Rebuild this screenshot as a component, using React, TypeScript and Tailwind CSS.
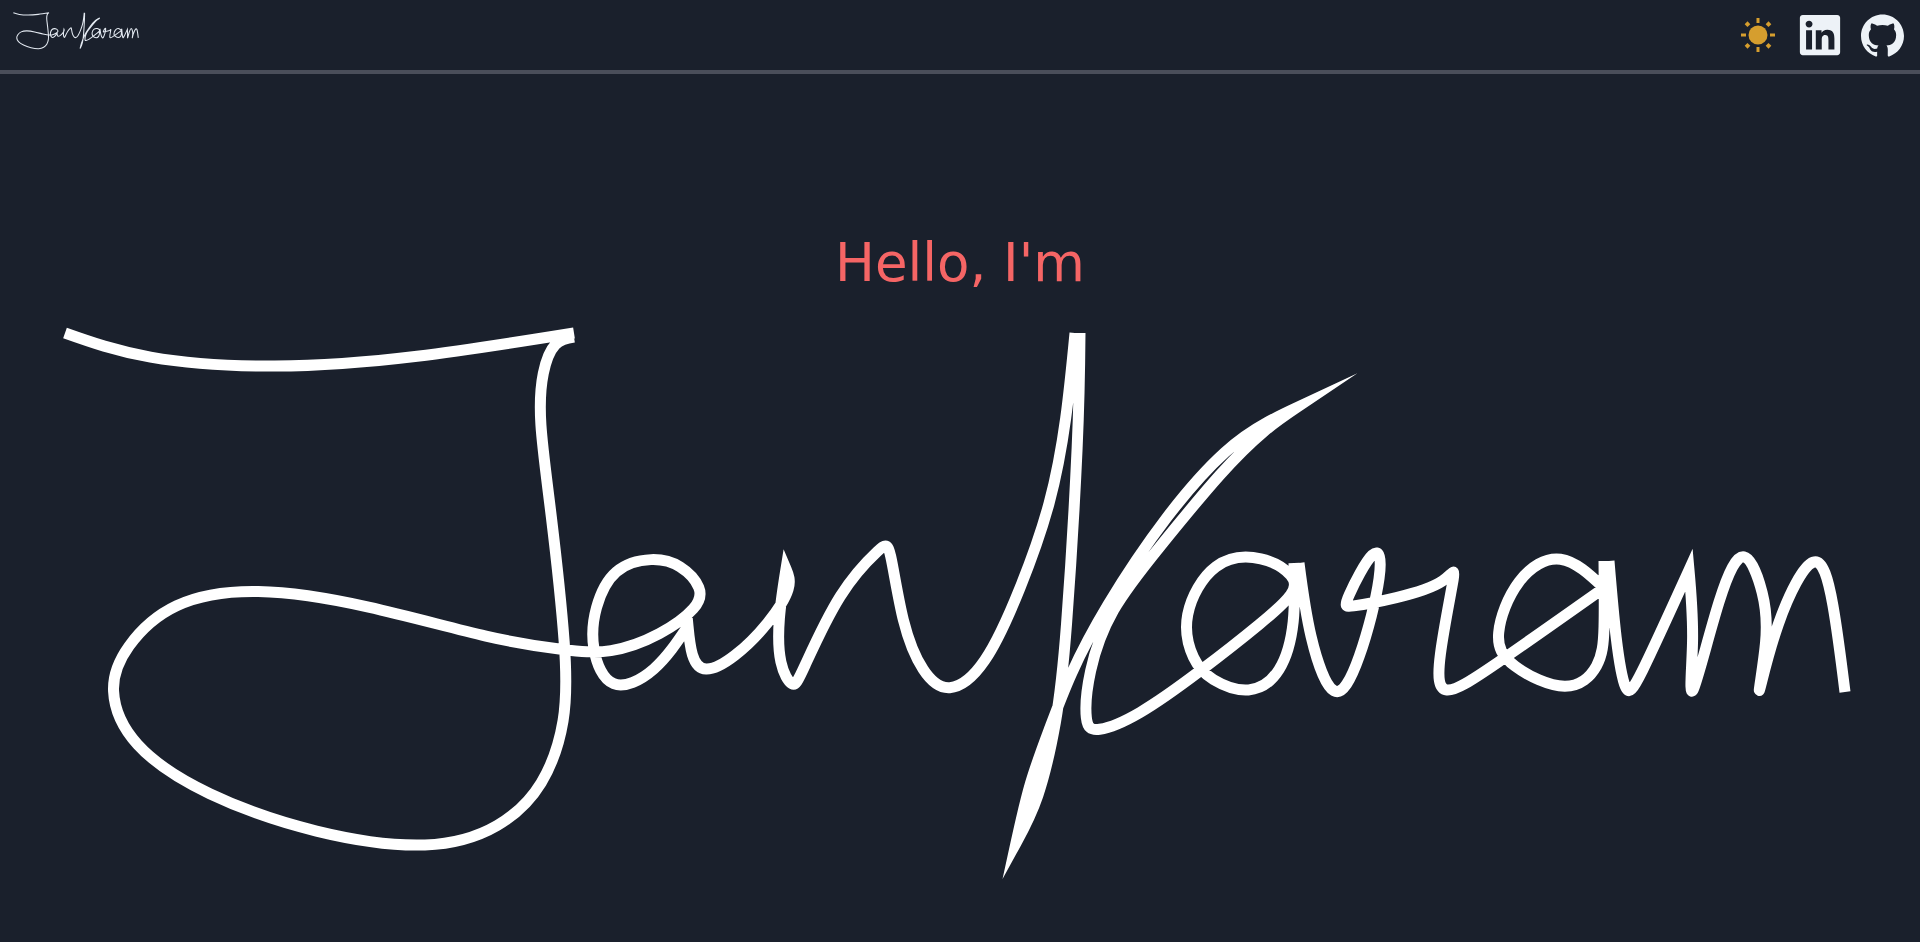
import { FaLinkedin } from 'react-icons/fa';
import { SiGithub } from 'react-icons/si';

type Pt = [number, number];

// each stroke is a list of smooth runs, a new run starts at a sharp corner
const strokes: Pt[][][] = [
  // J top bar
  [[[65, 335], [147, 360], [275, 369], [416, 359], [574, 335]]],
  // J stem, loop, first a and n, up to the top of K
  [
    [[574, 339], [555, 345], [543, 375], [540, 425], [551, 514], [565, 649], [564, 722], [542, 786], [498, 828], [428, 849], [316, 834], [208, 796], [135, 747], [112, 692], [128, 649], [175, 606], [257, 592], [367, 608], [490, 640], [562, 651], [610, 654], [660, 636], [695, 610], [700, 590], [680, 568], [652, 561], [615, 572], [596, 610], [593, 650], [612, 690], [655, 672], [688, 628]],
    [[688, 628], [692, 657], [705, 673], [735, 658], [768, 625], [790, 590], [786, 571]],
    [[786, 571], [779, 620], [780, 665], [793, 687], [803, 672], [840, 595], [880, 552], [890, 553], [903, 625], [923, 672], [949, 692], [985, 665], [1020, 590], [1050, 505], [1066, 420], [1075, 335]],
  ],
  // K stem, arm and the a that hangs on it
  [
    [[1080, 335], [1078, 440], [1066, 637], [1056, 722], [1038, 800], [1016, 845]],
    [[1016, 845], [1030, 785], [1050, 730], [1071, 676], [1106, 609], [1167, 518], [1226, 452], [1268, 424], [1296, 410]],
    [[1296, 410], [1264, 433], [1221, 475], [1160, 549], [1112, 612], [1090, 673], [1086, 722], [1098, 732], [1139, 716], [1200, 673], [1261, 625], [1292, 596], [1292, 578], [1262, 560], [1215, 565], [1185, 618], [1194, 661], [1212, 681], [1249, 694], [1280, 673], [1294, 624], [1294, 565]],
  ],
  // r, second a start
  [
    [[1299, 565], [1310, 637], [1334, 700], [1359, 661], [1381, 576], [1374, 551], [1347, 602], [1351, 608], [1396, 600], [1445, 585], [1455, 572], [1439, 661], [1445, 695], [1494, 667], [1604, 590]],
    [[1604, 590], [1561, 557], [1518, 582], [1497, 637], [1512, 667], [1567, 692], [1598, 667], [1604, 631], [1604, 563]],
  ],
  // last stem and m
  [
    [[1609, 563], [1616, 640], [1626, 692], [1640, 678], [1689, 572]],
    [[1689, 572], [1694, 640], [1690, 708], [1720, 597], [1744, 553], [1763, 597], [1767, 640], [1757, 705], [1777, 625], [1815, 555], [1833, 607], [1845, 694]],
  ],
];

// cubic b-spline over a run, hand picked points are noisy so this irons them out
const SHARPEN = 0.25;
const runToPath = (pts: Pt[]) => {
  const q = pts.map((p, i) => {
    const a = pts[i - 1];
    const b = pts[i + 1];
    if (!a || !b) return p;
    return [
      p[0] + SHARPEN * (p[0] - (a[0] + b[0]) / 2),
      p[1] + SHARPEN * (p[1] - (a[1] + b[1]) / 2),
    ] as Pt;
  });
  const at = (i: number): Pt => {
    if (i >= q.length) {
      const n = q.length - 1;
      return [2 * q[n][0] - q[n - 1][0], 2 * q[n][1] - q[n - 1][1]];
    }
    return q[i];
  };
  let d = '';
  for (let i = 0; i < q.length - 1; i++) {
    const [x1, y1] = q[i];
    const [x2, y2] = q[i + 1];
    const [x3, y3] = at(i + 2);
    const ex = (x1 + 4 * x2 + x3) / 6;
    const ey = (y1 + 4 * y2 + y3) / 6;
    d += `C${(2 * x1 + x2) / 3} ${(2 * y1 + y2) / 3} ${(x1 + 2 * x2) / 3} ${(y1 + 2 * y2) / 3} ${ex} ${ey}`;
  }
  return d;
};

const signaturePath = strokes
  .map((runs) => `M${runs[0][0][0]} ${runs[0][0][1]}` + runs.map(runToPath).join(''))
  .join('');

const Signature = ({
  viewBox,
  className,
  strokeWidth,
  miter,
}: {
  viewBox: string;
  className: string;
  strokeWidth: number;
  miter: number;
}) => (
  <svg viewBox={viewBox} className={className} fill="none">
    <path
      d={signaturePath}
      stroke="currentColor"
      strokeWidth={strokeWidth}
      strokeMiterlimit={miter}
    />
  </svg>
);

const SunIcon = () => (
  <svg viewBox="0 0 36 36" className="h-9 w-9 text-[#d69e2e]" fill="currentColor">
    <circle cx="18" cy="18" r="9.5" />
    <rect x="16.5" y="1" width="3" height="5" />
    <rect x="16.5" y="30" width="3" height="5" />
    <rect x="1" y="16.5" width="5" height="3" />
    <rect x="30" y="16.5" width="5" height="3" />
    <rect x="5.5" y="5.2" width="4" height="4" transform="rotate(45 7.5 7.2)" />
    <rect x="26.5" y="5.2" width="4" height="4" transform="rotate(45 28.5 7.2)" />
    <rect x="5.5" y="26.8" width="4" height="4" transform="rotate(45 7.5 28.8)" />
    <rect x="26.5" y="26.8" width="4" height="4" transform="rotate(45 28.5 28.8)" />
  </svg>
);

const App = () => {
  return (
    <div className="h-screen overflow-hidden bg-[#1a202c] font-['DejaVu_Sans',sans-serif]">
      <header className="box-content flex h-[70px] items-center justify-between border-b-4 border-[#4a4e5a] pl-[13px] pr-[16px]">
        <Signature
          viewBox="60 325 1795 555"
          className="mb-[7px] h-[39px] w-[126px] text-[#e2e8f0]"
          strokeWidth={15}
          miter={6}
        />
        <nav className="flex items-center text-[#edf2f7]">
          <SunIcon />
          <FaLinkedin className="ml-[21px] h-[46px] w-[46px]" />
          <SiGithub className="ml-[18px] h-[43px] w-[43px]" />
        </nav>
      </header>

      <main className="flex flex-col items-center">
        <h1 className="mt-[159px] text-[53px] leading-[60px] font-normal text-[#f56565]">
          Hello, I&apos;m
        </h1>
        <Signature
          viewBox="0 320 1920 570"
          className="mt-[25px] h-[570px] w-full text-white"
          strokeWidth={11}
          miter={24}
        />
      </main>
    </div>
  );
};

export default App;
